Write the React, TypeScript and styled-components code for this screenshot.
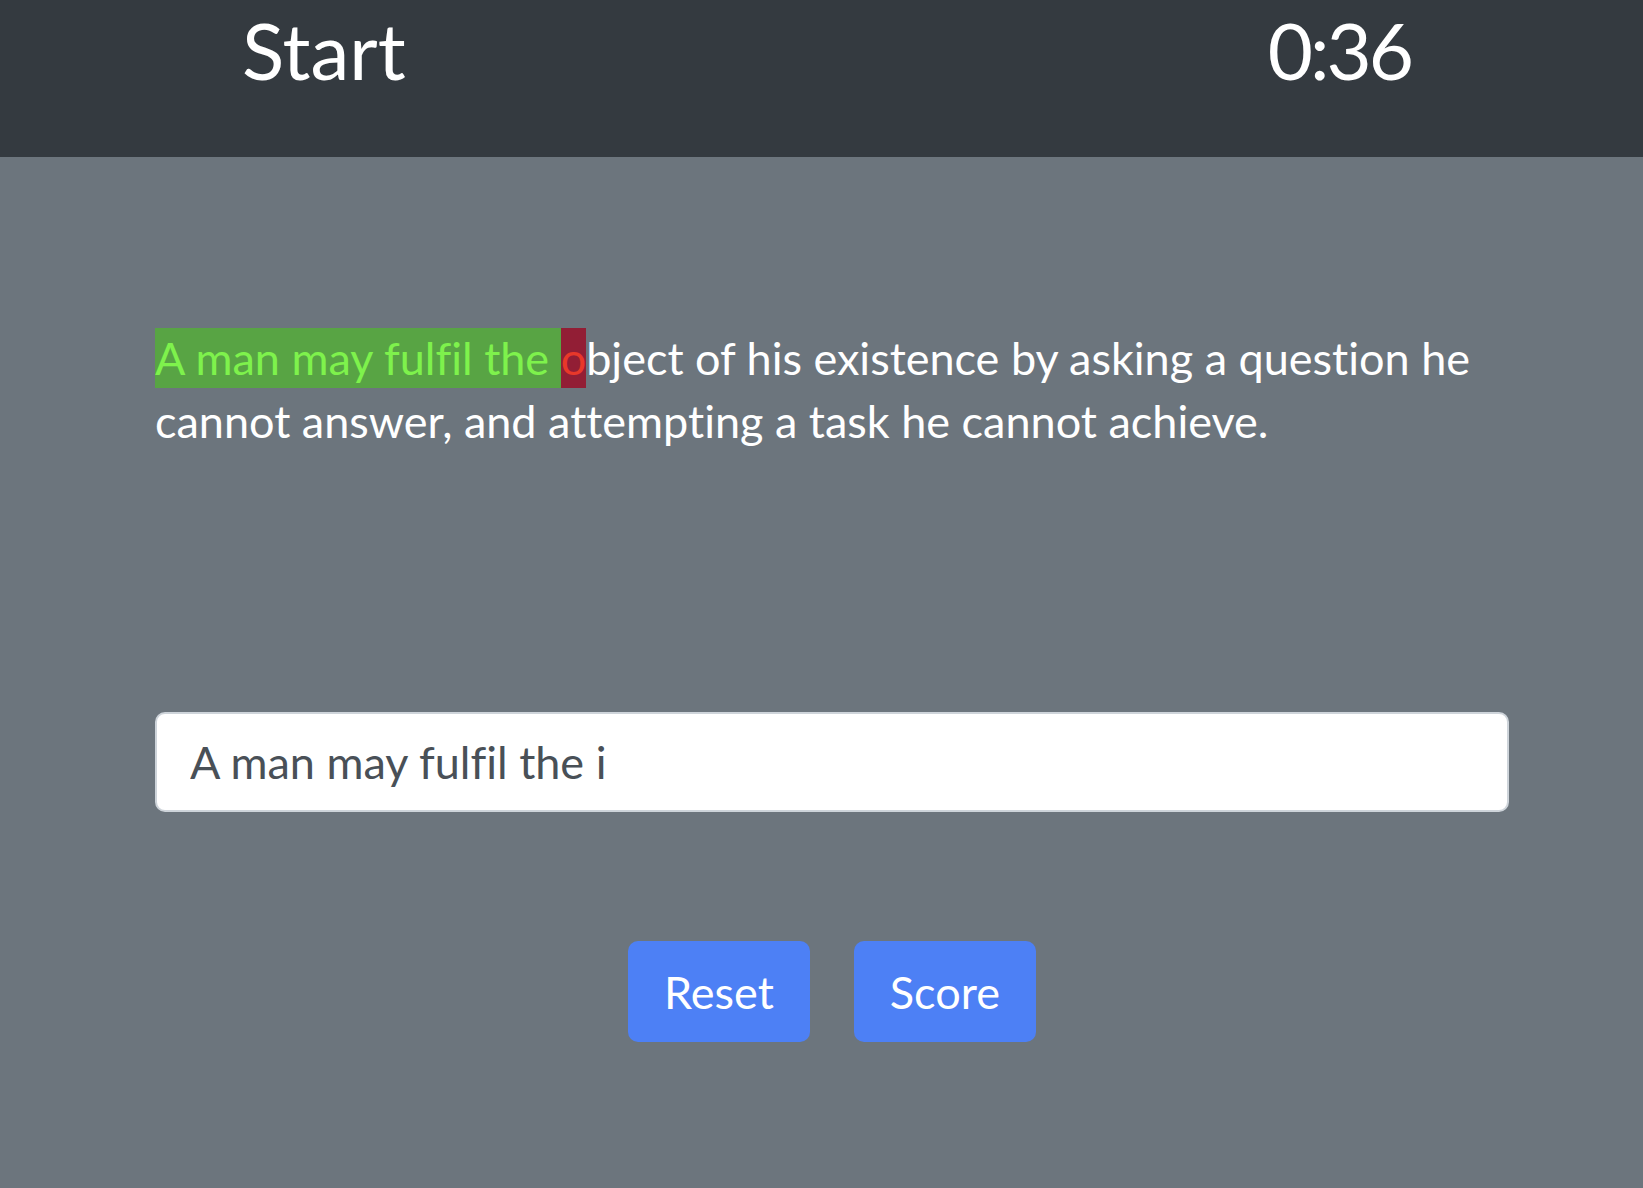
import React, { useState } from "react";
import styled, { createGlobalStyle } from "styled-components";

const GlobalStyle = createGlobalStyle`
  html, body {
    margin: 0;
    padding: 0;
    background: #6c757d;
  }
  body {
    font-family: "Lato", "Noto Sans", sans-serif;
    font-variant-ligatures: none;
    min-height: 1188px;
  }
  * { box-sizing: border-box; }
`;

const Header = styled.header`
  height: 157px;
  background: #343a40;
  display: flex;
  justify-content: space-between;
  align-items: flex-start;
  padding: 4px 232px 0 242px;
  color: #ffffff;
`;

const HeaderItem = styled.div<{ $tight?: boolean }>`
  font-size: 78px;
  line-height: 1.2;
  font-weight: 400;
  letter-spacing: ${(p) => (p.$tight ? "-3px" : "0")};
`;

const Main = styled.main`
  width: 1354px;
  margin-left: 155px;
  padding-top: 170px;
  display: flex;
  flex-direction: column;
`;

const Passage = styled.p`
  margin: 0;
  font-size: 45px;
  line-height: 63px;
  color: #ffffff;
`;

const Mark = styled.span<{ $kind: "ok" | "bad" }>`
  background: ${(p) => (p.$kind === "ok" ? "#58a444" : "#921e35")};
  color: ${(p) => (p.$kind === "ok" ? "#7ef24c" : "#e8382a")};
  padding: 3px 0;
`;

const Entry = styled.input`
  margin-top: 259px;
  width: 100%;
  height: 100px;
  border: 2px solid #ced4da;
  border-radius: 10px;
  background: #ffffff;
  padding: 0 33px;
  font-family: "Lato", "Noto Sans", sans-serif;
  font-variant-ligatures: none;
  font-size: 45px;
  color: #495057;
  outline: none;
`;

const Actions = styled.div`
  margin-top: 129px;
  display: flex;
  justify-content: center;
  gap: 44px;
`;

const ActionButton = styled.button`
  height: 101px;
  padding: 0 36px;
  border: none;
  border-radius: 10px;
  background: #4d80f5;
  color: #ffffff;
  font-family: "Lato", "Noto Sans", sans-serif;
  font-size: 45px;
  cursor: pointer;
`;

export default function App() {
  const [value, setValue] = useState("A man may fulfil the i");
  return (
    <>
      <GlobalStyle />
      <Header>
        <HeaderItem>Start</HeaderItem>
        <HeaderItem $tight>0:36</HeaderItem>
      </Header>
      <Main>
        <Passage>
          <Mark $kind="ok">A man may fulfil the </Mark>
          <Mark $kind="bad">o</Mark>
          bject of his existence by asking a question he cannot answer, and
          attempting a task he cannot achieve.
        </Passage>
        <Entry value={value} onChange={(e) => setValue(e.target.value)} />
        <Actions>
          <ActionButton>Reset</ActionButton>
          <ActionButton>Score</ActionButton>
        </Actions>
      </Main>
    </>
  );
}
